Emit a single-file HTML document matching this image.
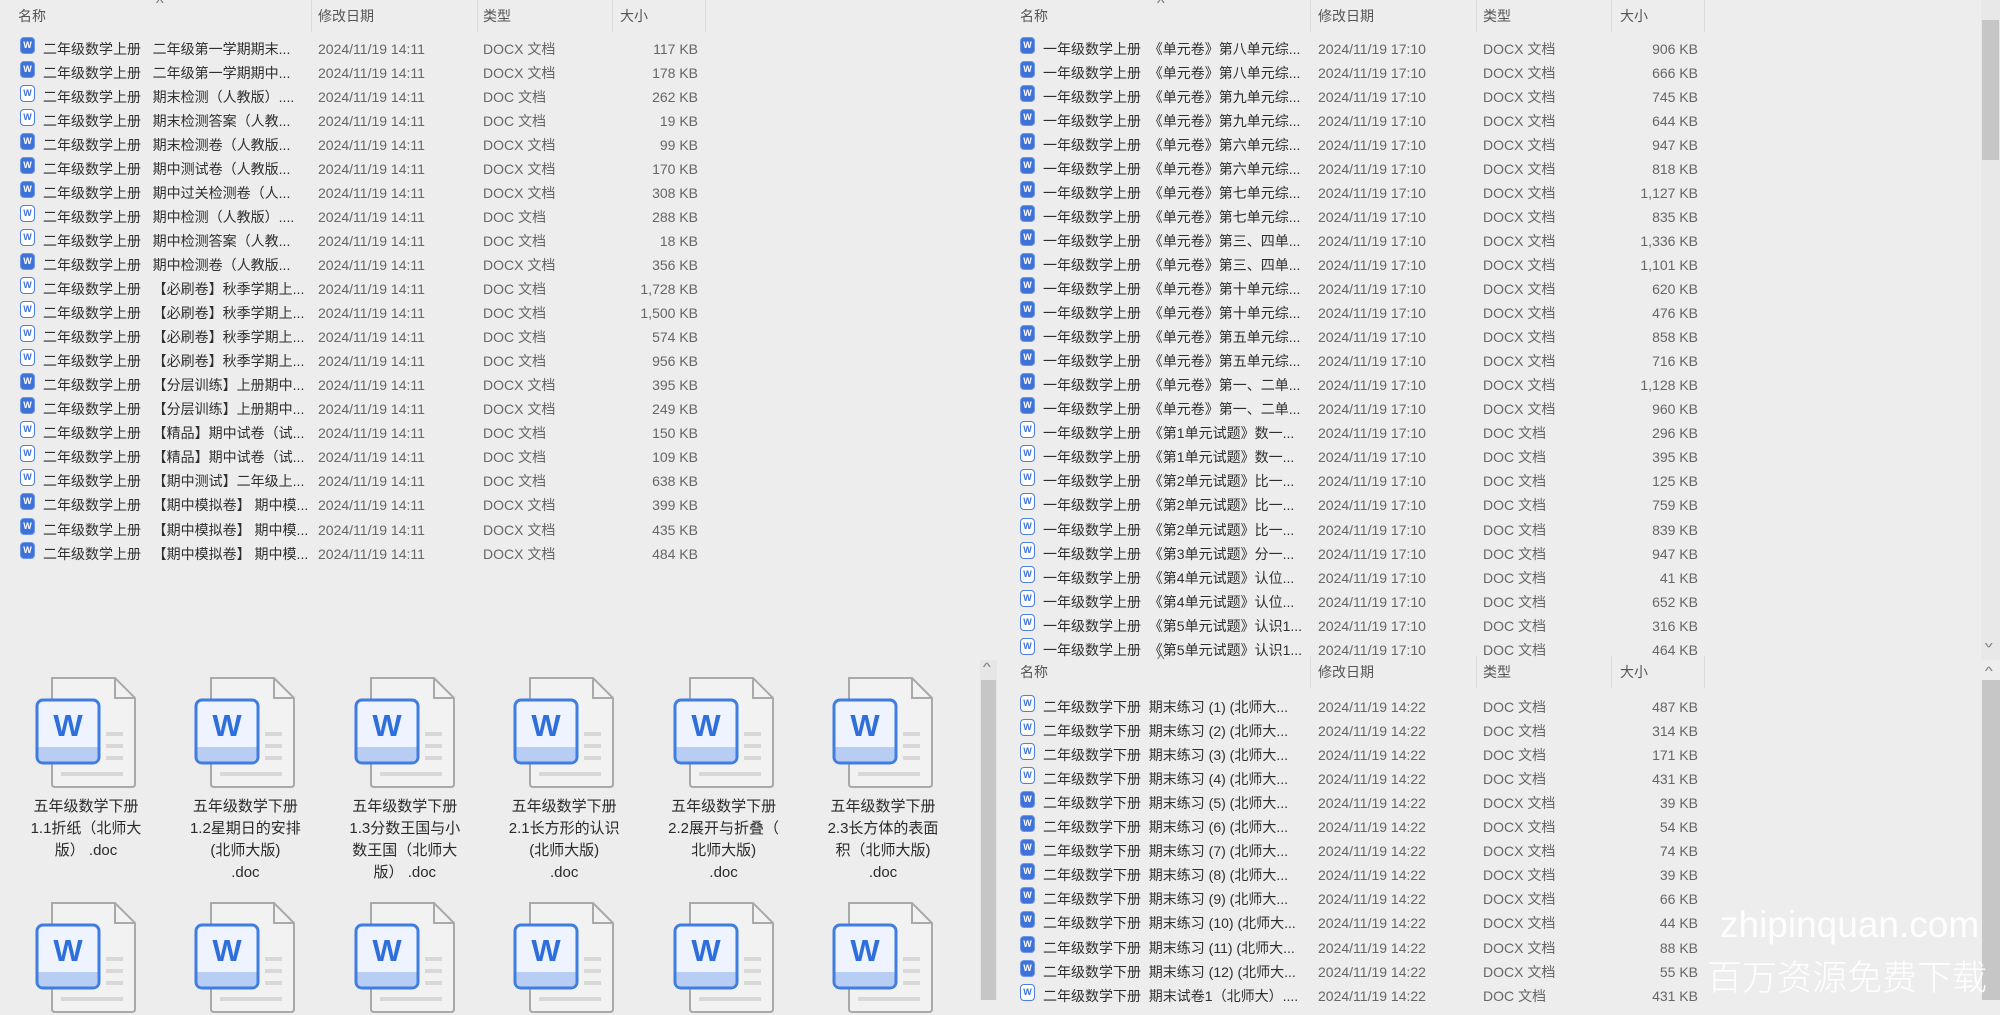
<!DOCTYPE html>
<html><head><meta charset="utf-8"><style>
*{margin:0;padding:0;box-sizing:border-box}
body{width:2000px;height:1000px;overflow:hidden;background:#ededed;font-family:"Liberation Sans","Noto Sans CJK SC",sans-serif;position:relative;color:#333}
.p{position:absolute}
.h{position:absolute;top:5px;font-size:14px;color:#555;height:22px;line-height:22px}
.sep{position:absolute;top:0;width:1px;height:32px;background:#dcdcdc}
.r{position:absolute;height:24px;line-height:24px;font-size:14px;white-space:nowrap}
.r span{position:absolute;top:0}
.n{color:#2e2e2e}
.d,.t,.s{color:#666}
.s{text-align:right;width:100px}
.ic{position:absolute;top:4px;width:15px;height:17px;border:1.5px solid #4a7fdf;border-radius:4px;background:#fff;font-size:9px;line-height:14px;text-align:center;color:#3d72d8;font-weight:bold}
.ic.x{background:#3d72d8;color:#fff;border-color:#6d97e6}
.car{position:absolute;font-size:12px;color:#777;transform:scaleX(1.4)}
.lab{position:absolute;width:140px;text-align:center;font-size:15px;line-height:22px;color:#2a2a2a}
.wm{position:absolute;color:#fff;white-space:nowrap}
</style></head><body>

<div class="car" style="left:157px;top:-4px">^</div>
<div class="h" style="left:18px">名称</div>
<div class="sep" style="left:311px"></div>
<div class="h" style="left:318px">修改日期</div>
<div class="sep" style="left:477px"></div>
<div class="h" style="left:483px">类型</div>
<div class="sep" style="left:612px"></div>
<div class="h" style="left:620px">大小</div>
<div class="sep" style="left:705px"></div>

<div id="L"></div>

<div class="car" style="left:1158px;top:-4px">^</div>
<div class="h" style="left:1020px">名称</div>
<div class="sep" style="left:1310px"></div>
<div class="h" style="left:1318px">修改日期</div>
<div class="sep" style="left:1476px"></div>
<div class="h" style="left:1483px">类型</div>
<div class="sep" style="left:1611px"></div>
<div class="h" style="left:1620px">大小</div>
<div class="sep" style="left:1704px"></div>

<div class="car" style="left:1158px;top:652px">^</div>
<div class="h" style="left:1020px;top:661px">名称</div>
<div class="sep" style="left:1310px;top:656px"></div>
<div class="h" style="left:1318px;top:661px">修改日期</div>
<div class="sep" style="left:1476px;top:656px"></div>
<div class="h" style="left:1483px;top:661px">类型</div>
<div class="sep" style="left:1611px;top:656px"></div>
<div class="h" style="left:1620px;top:661px">大小</div>
<div class="sep" style="left:1704px;top:656px"></div>

<div class="p" style="left:980px;top:660px;width:17px;height:340px;background:#e6e6e6"></div>
<div class="p" style="left:981px;top:680px;width:15px;height:320px;background:#c6c6c6"></div>
<div class="car" style="left:984px;top:660px">^</div>
<div class="p" style="left:1981px;top:0;width:19px;height:660px;background:#e8e8e8"></div>
<div class="p" style="left:1982px;top:20px;width:17px;height:140px;background:#c6c6c6"></div>
<div class="car" style="left:1986px;top:636px;transform:scaleX(1.4) rotate(180deg)">^</div>
<div class="car" style="left:1986px;top:664px">^</div>
<div class="p" style="left:1982px;top:680px;width:18px;height:320px;background:#c6c6c6"></div>

<div id="G"></div>

<div class="wm" style="left:1720px;top:904px;font-size:37px;font-family:'Liberation Sans',sans-serif;font-weight:normal;opacity:0.95">zhipinquan.com</div>
<div class="wm" style="left:1707px;top:950px;font-size:35px;font-family:'Noto Sans CJK SC',sans-serif;font-weight:300;opacity:0.95">百万资源免费下载</div>

<script>
function rows(x0,y0,data,date){
 var h='';
 data.forEach(function(r,i){
  var y=y0+i*24.05-12;
  var dx=r[1].indexOf('DOCX')==0;
  h+='<div class="r" style="left:'+x0+'px;top:'+y+'px;width:700px">'+
   '<span class="ic'+(dx?' x':'')+'" style="left:2px">W</span>'+
   '<span class="n" style="left:25px">'+r[0]+'</span>'+
   '<span class="d" style="left:300px">'+date+'</span>'+
   '<span class="t" style="left:465px">'+r[1]+'</span>'+
   '<span class="s" style="left:580px">'+r[2]+'</span></div>';
 });
 return h;
}
var A='二年级数学上册&nbsp;&nbsp;&nbsp;';
var L=[
[A+'二年级第一学期期末...','DOCX 文档','117 KB'],
[A+'二年级第一学期期中...','DOCX 文档','178 KB'],
[A+'期末检测（人教版）....','DOC 文档','262 KB'],
[A+'期末检测答案（人教...','DOC 文档','19 KB'],
[A+'期末检测卷（人教版...','DOCX 文档','99 KB'],
[A+'期中测试卷（人教版...','DOCX 文档','170 KB'],
[A+'期中过关检测卷（人...','DOCX 文档','308 KB'],
[A+'期中检测（人教版）....','DOC 文档','288 KB'],
[A+'期中检测答案（人教...','DOC 文档','18 KB'],
[A+'期中检测卷（人教版...','DOCX 文档','356 KB'],
[A+'【必刷卷】秋季学期上...','DOC 文档','1,728 KB'],
[A+'【必刷卷】秋季学期上...','DOC 文档','1,500 KB'],
[A+'【必刷卷】秋季学期上...','DOC 文档','574 KB'],
[A+'【必刷卷】秋季学期上...','DOC 文档','956 KB'],
[A+'【分层训练】上册期中...','DOCX 文档','395 KB'],
[A+'【分层训练】上册期中...','DOCX 文档','249 KB'],
[A+'【精品】期中试卷（试...','DOC 文档','150 KB'],
[A+'【精品】期中试卷（试...','DOC 文档','109 KB'],
[A+'【期中测试】二年级上...','DOC 文档','638 KB'],
[A+'【期中模拟卷】 期中模...','DOCX 文档','399 KB'],
[A+'【期中模拟卷】 期中模...','DOCX 文档','435 KB'],
[A+'【期中模拟卷】 期中模...','DOCX 文档','484 KB']];
var B='一年级数学上册&nbsp;&nbsp;';
var R=[
[B+'《单元卷》第八单元综...','DOCX 文档','906 KB'],
[B+'《单元卷》第八单元综...','DOCX 文档','666 KB'],
[B+'《单元卷》第九单元综...','DOCX 文档','745 KB'],
[B+'《单元卷》第九单元综...','DOCX 文档','644 KB'],
[B+'《单元卷》第六单元综...','DOCX 文档','947 KB'],
[B+'《单元卷》第六单元综...','DOCX 文档','818 KB'],
[B+'《单元卷》第七单元综...','DOCX 文档','1,127 KB'],
[B+'《单元卷》第七单元综...','DOCX 文档','835 KB'],
[B+'《单元卷》第三、四单...','DOCX 文档','1,336 KB'],
[B+'《单元卷》第三、四单...','DOCX 文档','1,101 KB'],
[B+'《单元卷》第十单元综...','DOCX 文档','620 KB'],
[B+'《单元卷》第十单元综...','DOCX 文档','476 KB'],
[B+'《单元卷》第五单元综...','DOCX 文档','858 KB'],
[B+'《单元卷》第五单元综...','DOCX 文档','716 KB'],
[B+'《单元卷》第一、二单...','DOCX 文档','1,128 KB'],
[B+'《单元卷》第一、二单...','DOCX 文档','960 KB'],
[B+'《第1单元试题》数一...','DOC 文档','296 KB'],
[B+'《第1单元试题》数一...','DOC 文档','395 KB'],
[B+'《第2单元试题》比一...','DOC 文档','125 KB'],
[B+'《第2单元试题》比一...','DOC 文档','759 KB'],
[B+'《第2单元试题》比一...','DOC 文档','839 KB'],
[B+'《第3单元试题》分一...','DOC 文档','947 KB'],
[B+'《第4单元试题》认位...','DOC 文档','41 KB'],
[B+'《第4单元试题》认位...','DOC 文档','652 KB'],
[B+'《第5单元试题》认识1...','DOC 文档','316 KB'],
[B+'《第5单元试题》认识1...','DOC 文档','464 KB']];
var C='二年级数学下册&nbsp;&nbsp;期末练习 ';
var S=['487','314','171','431','39','54','74','39','66','44','88','55','431'];
var T=['DOC','DOC','DOC','DOC','DOCX','DOCX','DOCX','DOCX','DOCX','DOCX','DOCX','DOCX','DOC'];
var R2=[];
for(var i=0;i<13;i++){
 var nm=i<12?C+'('+(i+1)+') (北师大...':'二年级数学下册&nbsp;&nbsp;期末试卷1（北师大）....';
 R2.push([nm,T[i]+' 文档',S[i]+' KB']);
}
document.getElementById('L').innerHTML=rows(18,48.5,L,'2024/11/19 14:11')+rows(1018,48.5,R,'2024/11/19 17:10')+rows(1018,707,R2,'2024/11/19 14:22');

var labs=[
['五年级数学下册','1.1折纸（北师大','版） .doc'],
['五年级数学下册','1.2星期日的安排','(北师大版)','.doc'],
['五年级数学下册','1.3分数王国与小','数王国（北师大','版） .doc'],
['五年级数学下册','2.1长方形的认识','(北师大版)','.doc'],
['五年级数学下册','2.2展开与折叠（','北师大版)','.doc'],
['五年级数学下册','2.3长方体的表面','积（北师大版)','.doc']];
function icon(x,y){
 return '<svg class="p" style="left:'+x+'px;top:'+y+'px" width="110" height="114" viewBox="0 0 110 114">'+
 '<path d="M21 2 H84 L104 22 V108 Q104 111 101 111 H24 Q21 111 21 108 Z" fill="#f2f2f2" stroke="#a9a9a9" stroke-width="2"/>'+
 '<path d="M84 2 V22 H104" fill="none" stroke="#a9a9a9" stroke-width="2"/>'+
 '<rect x="75" y="56" width="17" height="4" fill="#d8d8d8"/><rect x="75" y="68" width="17" height="4" fill="#d8d8d8"/><rect x="75" y="80" width="17" height="4" fill="#d8d8d8"/><rect x="30" y="96" width="62" height="4" fill="#d8d8d8"/>'+
 '<rect x="6" y="24" width="62" height="63" rx="6" fill="#eef3fd" stroke="#3f7de0" stroke-width="3"/>'+
 '<path d="M7.5 71 H66.5 V81 Q66.5 85.5 62 85.5 H12 Q7.5 85.5 7.5 81 Z" fill="#b8cdf3"/>'+
 '<text x="37" y="60" text-anchor="middle" font-family="Liberation Sans,sans-serif" font-weight="bold" font-size="31" fill="#2f6fdc">W</text></svg>';
}
var g='';
for(var c=0;c<6;c++){
 var cx=86+c*159.4;
 g+=icon(cx-55,676)+icon(cx-55,901);
 g+='<div class="lab" style="left:'+(cx-70)+'px;top:796px">'+labs[c].join('<br>')+'</div>';
}
document.getElementById('G').innerHTML=g;
</script>
</body></html>
